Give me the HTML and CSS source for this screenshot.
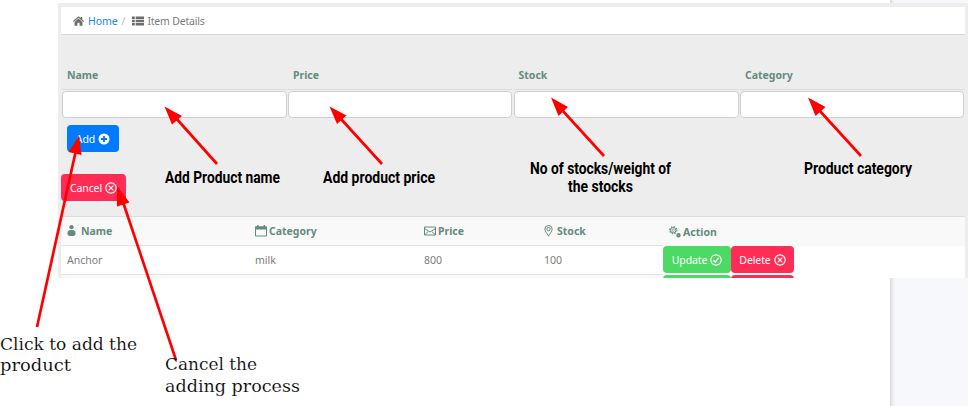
FILE: index.html
```html
<!DOCTYPE html>
<html lang="en">
<head>
<meta charset="utf-8">
<title>Item Details</title>
<link rel="stylesheet" href="styles.css">
</head>
<body>
<div class="page">
  <main class="panel">
    <nav class="crumbs">
      <svg class="home" viewBox="0 0 12 11"><path d="M0 5.600 6 .300 8.300 2.300V1h1.800v2.900L12 5.600l-.800.900L6 2 .800 6.500z"/><path d="M1.700 6.500 6 2.800l4.300 3.700V10.800H7.200V7.500H4.800v3.300H1.700z"/></svg>
      <a href="#">Home</a><span class="slash">/</span>
      <svg class="list" viewBox="0 0 13 10"><path d="M0 0h3v2.700H0zM4 0h9v2.700H4zM0 3.600h3v2.700H0zM4 3.600h9v2.700H4zM0 7.200h3v2.700H0zM4 7.200h9v2.700H4z"/></svg>
      <span class="here">Item Details</span>
    </nav>
    <form class="fields">
      <label>Name</label><label>Price</label><label>Stock</label><label>Category</label>
      <input aria-label="Name"><input aria-label="Price"><input aria-label="Stock"><input aria-label="Category">
    </form>
    <button class="btn add">Add <svg viewBox="0 0 12 12"><circle cx="6" cy="6" r="5.500" fill="#fff"/><path d="M6 3v6M3 6h6" stroke="#007bff" stroke-width="1.800"/></svg></button>
    <button class="btn red cancel">Cancel <svg class="line" viewBox="0 0 12 12"><circle cx="6" cy="6" r="5.200"/><path d="m3.700 3.700 4.600 4.600m0-4.600L3.700 8.300"/></svg></button>
    <section class="table">
      <div class="row head">
        <span><svg class="person" viewBox="0 0 8 12"><circle cx="4" cy="2.200" r="2.100"/><path d="M0 8.500C0 5.500 1.500 5 4 5s4 .500 4 3.500C8 10.500 7 11 4 11S0 10.500 0 8.500z"/></svg>Name</span>
        <span><svg class="cal" viewBox="0 0 12 12"><path d="M.500 2h11v9H.500z" fill="none" stroke="#648b7e"/><path d="M0 1.500h12V4.500H0zM2 0h1.500v3H2zM8.500 0H10v3H8.500z"/></svg>Category</span>
        <span><svg class="mail" viewBox="0 0 12 10"><path d="M.500 1h11v8H.500zM.500 2.500 6 6l5.500-3.500M1 8.500l3.200-3m6.800 3-3.200-3"/></svg>Price</span>
        <span><svg class="pin" viewBox="0 0 9 12"><path d="M4.500 11.200C3.500 8.500.800 6.500.800 4.200a3.700 3.700 0 0 1 7.400 0c0 2.300-2.700 4.300-3.700 7z"/><circle cx="4.500" cy="4.200" r="1.700"/></svg>Stock</span>
        <span><svg class="gear" viewBox="0 0 12 12"><circle cx="4.200" cy="4.200" r="3.600" stroke-width="1.200" stroke-dasharray="1.400 1.427"/><circle cx="4.200" cy="4.200" r="2.700"/><circle cx="4.200" cy="4.200" r="1.200" stroke-width=".7"/><circle cx="9.500" cy="9.300" r="1.300" stroke-width="1.800"/></svg>Action</span>
      </div>
      <div class="row">
        <span>Anchor</span><span>milk</span><span>800</span><span>100</span>
        <div class="actions"><button class="btn green">Update <svg class="line" viewBox="0 0 12 12"><circle cx="6" cy="6" r="5.200"/><path d="m3.500 6.200 1.700 1.900 3.300-4.200" stroke-width="1.500"/></svg></button><button class="btn red">Delete <svg class="line" viewBox="0 0 12 12"><circle cx="6" cy="6" r="5.200"/><path d="m3.700 3.700 4.600 4.600m0-4.600L3.700 8.300"/></svg></button></div>
      </div>
      <div class="row next">
        <span></span><span></span><span></span><span></span>
        <div class="actions"><i class="btn green"></i><i class="btn red"></i></div>
      </div>
    </section>
  </main>
  <svg class="notes" viewBox="0 0 968 406">
    <g class="shaft"><path d="M217 164 175 117M382 164 341 119M604 156 562 110M861 156 819 110M37 327 76 150M176 360 123 202"/></g>
    <g class="tip"><path d="M164.500 106.500 182 116 172 124.500zM329.500 106.500 346.500 115.500 337 124zM551 97.500 568 107 558.500 116zM808 97.500 825.500 107 815.500 116zM79 135.500 81.500 155 68.500 152zM117 186 129.500 202.500 117 206.500z"/></g>
    <g class="bold">
      <text x="165" y="183" textLength="115" lengthAdjust="spacingAndGlyphs">Add Product name</text>
      <text x="323" y="183" textLength="112" lengthAdjust="spacingAndGlyphs">Add product price</text>
      <text x="530" y="174" textLength="141" lengthAdjust="spacingAndGlyphs">No of stocks/weight of</text>
      <text x="568" y="192" textLength="65" lengthAdjust="spacingAndGlyphs">the stocks</text>
      <text x="804" y="174" textLength="108" lengthAdjust="spacingAndGlyphs">Product category</text>
    </g>
    <g class="slab">
      <text x="0" y="350" textLength="137" lengthAdjust="spacingAndGlyphs">Click to add the</text>
      <text x="0" y="371" textLength="71" lengthAdjust="spacingAndGlyphs">product</text>
      <text x="165" y="370" textLength="92" lengthAdjust="spacingAndGlyphs">Cancel the</text>
      <text x="165" y="392" textLength="135" lengthAdjust="spacingAndGlyphs">adding process</text>
    </g>
  </svg>
</div>
</body>
</html>
```
FILE: styles.css
```css
* { box-sizing: border-box; }
body { margin: 0; background: #fff; }
.page {
  position: relative; width: 968px; height: 406px; padding: 3px 0 0 58px; overflow: hidden;
  background: linear-gradient(90deg, #fff 890px, #d5d7d9 890px, #eff0f3 893px, #f7f8fb 896px);
  font: 10.5px/16px "Noto Sans", sans-serif; color: #7c7c7c;
}
.panel { width: 910px; height: 275px; padding: 4px 3px 0; background: #ededed; overflow: hidden; }
.crumbs { display: flex; align-items: center; height: 28px; padding-left: 12px; background: #fff; border-bottom: 1px solid #d8d8d8; }
.crumbs a { color: #2085ff; text-decoration: none; letter-spacing: -.1px; }
.crumbs svg { fill: #6c6c6c; }
.here { letter-spacing: -.2px; }
.home { width: 11px; height: 10px; margin-right: 4px; }
.slash { margin: 0 7px 0 4px; color: #bbb; }
.list { width: 12px; height: 10px; margin-right: 3px; }
.fields { display: grid; grid-template-columns: 224.500px 224px 225px 224px; column-gap: 1.500px; grid-template-rows: 28px 28px; padding: 27px 1px 0; height: 84px; }
.fields label { padding: 5px 0 0 5px; color: #648b7e; font-weight: 700; border-bottom: 1px solid #ddd; }
.fields input { width: 100%; height: 27px; margin-top: 1px; border: 1px solid #ced0d2; border-radius: 4px; background: #fff; }
.btn { display: flex; align-items: center; justify-content: center; gap: 3px; height: 27px; padding: 0; border: 0; border-radius: 4px; color: #fff; font: 10.5px/16px "Noto Sans", sans-serif; letter-spacing: -.1px; }
.btn svg { width: 12px; height: 12px; }
.line { fill: none; stroke: #fff; stroke-width: 1.200; }
.add { width: 52px; margin: 6px 0 0 6px; background: #007bff; }
.cancel { width: 65px; margin-top: 22px; }
.red { background: #ff2d55; }
.green { background: #4cd964; }
.table { margin-top: 15px; border-top: 1px solid #ddd; background: #fff; }
.row { display: grid; grid-template-columns: 188px 169px 120px 125px 302px; height: 29px; }
.row > span { display: flex; align-items: center; padding-left: 6px; border-bottom: 1px solid #e3e3e3; }
.head { background: #f9f9f9; color: #648b7e; font-weight: 700; }
.head > span:last-child { border-bottom: 0; }
.head svg { width: 12px; height: 12px; margin-right: 2px; fill: #648b7e; }
.head .person { width: 9px; margin-right: 5px; }
.head .mail, .head .pin, .head .gear { fill: none; stroke: #648b7e; }
.head .mail { height: 10px; }
.head .pin { width: 9px; margin-right: 4px; }
.actions { display: flex; }
.actions .green { width: 68px; }
.actions .red { width: 63px; }
.next > span { background: #f9f9f9; }
.notes { position: absolute; left: 0; top: 0; width: 968px; height: 406px; }
.shaft { stroke: #f00; stroke-width: 2.700; fill: none; }
.tip { fill: #f00; }
.bold { font: 700 16.500px Roboto, sans-serif; fill: #000; }
.slab { font: 17.500px "DejaVu Serif", serif; fill: #000; stroke: #fff; stroke-width: .15px; }
```
